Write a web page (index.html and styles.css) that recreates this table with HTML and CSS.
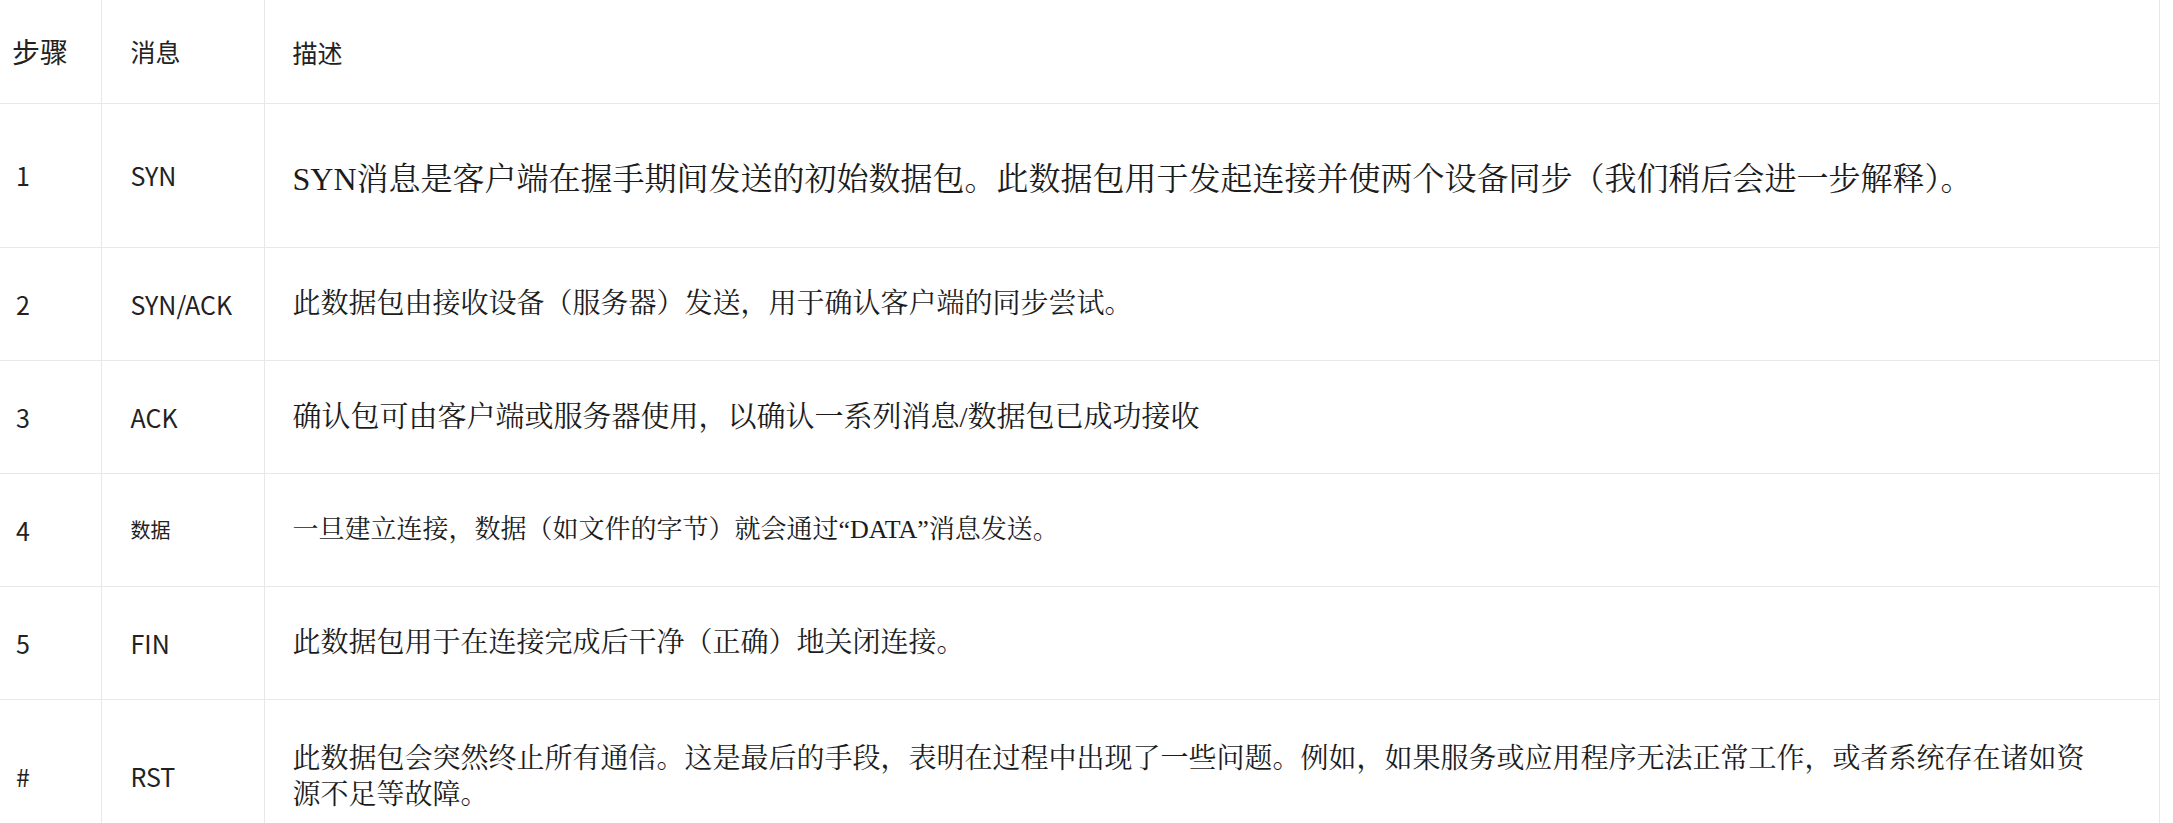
FILE: index.html
```html
<!DOCTYPE html>
<html lang="zh-CN">
<head>
<meta charset="utf-8">
<title>TCP 握手消息</title>
<link rel="stylesheet" href="styles.css">
</head>
<body>
<table class="steps">
  <colgroup>
    <col class="c-step">
    <col class="c-msg">
    <col class="c-desc">
  </colgroup>
  <thead>
    <tr class="row-head">
      <th class="step step-head">步骤</th>
      <th class="msg">消息</th>
      <th class="desc desc-head">描述</th>
    </tr>
  </thead>
  <tbody>
    <tr class="row-lead">
      <td class="step">1</td>
      <td class="msg">SYN</td>
      <td class="desc desc-lg">SYN消息是客户端在握手期间发送的初始数据包。此数据包用于发起连接并使两个设备同步（我们稍后会进一步解释）。</td>
    </tr>
    <tr class="row">
      <td class="step">2</td>
      <td class="msg">SYN/ACK</td>
      <td class="desc">此数据包由接收设备（服务器）发送，用于确认客户端的同步尝试。</td>
    </tr>
    <tr class="row">
      <td class="step">3</td>
      <td class="msg">ACK</td>
      <td class="desc desc-md">确认包可由客户端或服务器使用，以确认一系列消息/数据包已成功接收</td>
    </tr>
    <tr class="row">
      <td class="step">4</td>
      <td class="msg msg-sm">数据</td>
      <td class="desc desc-sm">一旦建立连接，数据（如文件的字节）就会通过“DATA”消息发送。</td>
    </tr>
    <tr class="row">
      <td class="step">5</td>
      <td class="msg">FIN</td>
      <td class="desc">此数据包用于在连接完成后干净（正确）地关闭连接。</td>
    </tr>
    <tr class="row-last">
      <td class="step">#</td>
      <td class="msg">RST</td>
      <td class="desc">此数据包会突然终止所有通信。这是最后的手段，表明在过程中出现了一些问题。例如，如果服务或应用程序无法正常工作，或者系统存在诸如资源不足等故障。</td>
    </tr>
  </tbody>
</table>
</body>
</html>
```

FILE: styles.css
```css
html, body {
  margin: 0;
  padding: 0;
  background: #ffffff;
}

.steps {
  border-collapse: collapse;
  width: 2160px;
  table-layout: fixed;
  font-family: "Noto Sans CJK SC", "Noto Sans", sans-serif;
  color: #222222;
}

.c-step { width: 101px; }
.c-msg { width: 163px; }

.steps th,
.steps td {
  border-bottom: 1px solid #e8e8e8;
  border-right: 1px solid #e8e8e8;
  vertical-align: middle;
  text-align: left;
  font-weight: 400;
  padding: 0;
}

.row-head th { height: 103px; }
.row-lead td { height: 143px; }
.row td { height: 112px; }
.row-last td { height: 153px; }

.step {
  padding-left: 16px !important;
  font-size: 25px;
  line-height: 1.3;
}

.step-head {
  padding-left: 12px !important;
  font-size: 28px;
}

.msg {
  padding-left: 29px !important;
  font-size: 25px;
  line-height: 1.3;
}

.msg-sm { font-size: 20px; }

.desc {
  padding-left: 28px !important;
  padding-right: 60px !important;
  font-family: "Liberation Serif", "Noto Serif CJK SC", "Noto Sans CJK SC", serif;
  font-size: 28px;
  line-height: 36px;
  color: #1c1c1c;
}

.desc-head {
  font-family: "Noto Sans CJK SC", "Noto Sans", sans-serif;
  font-size: 25px;
  color: #222222;
}

.row-lead .desc-lg {
  font-size: 32px;
  line-height: 42px;
  padding-top: 6px !important;
  height: 137px;
}
.desc-md { font-size: 29px; }
.desc-sm { font-size: 26px; }
```
